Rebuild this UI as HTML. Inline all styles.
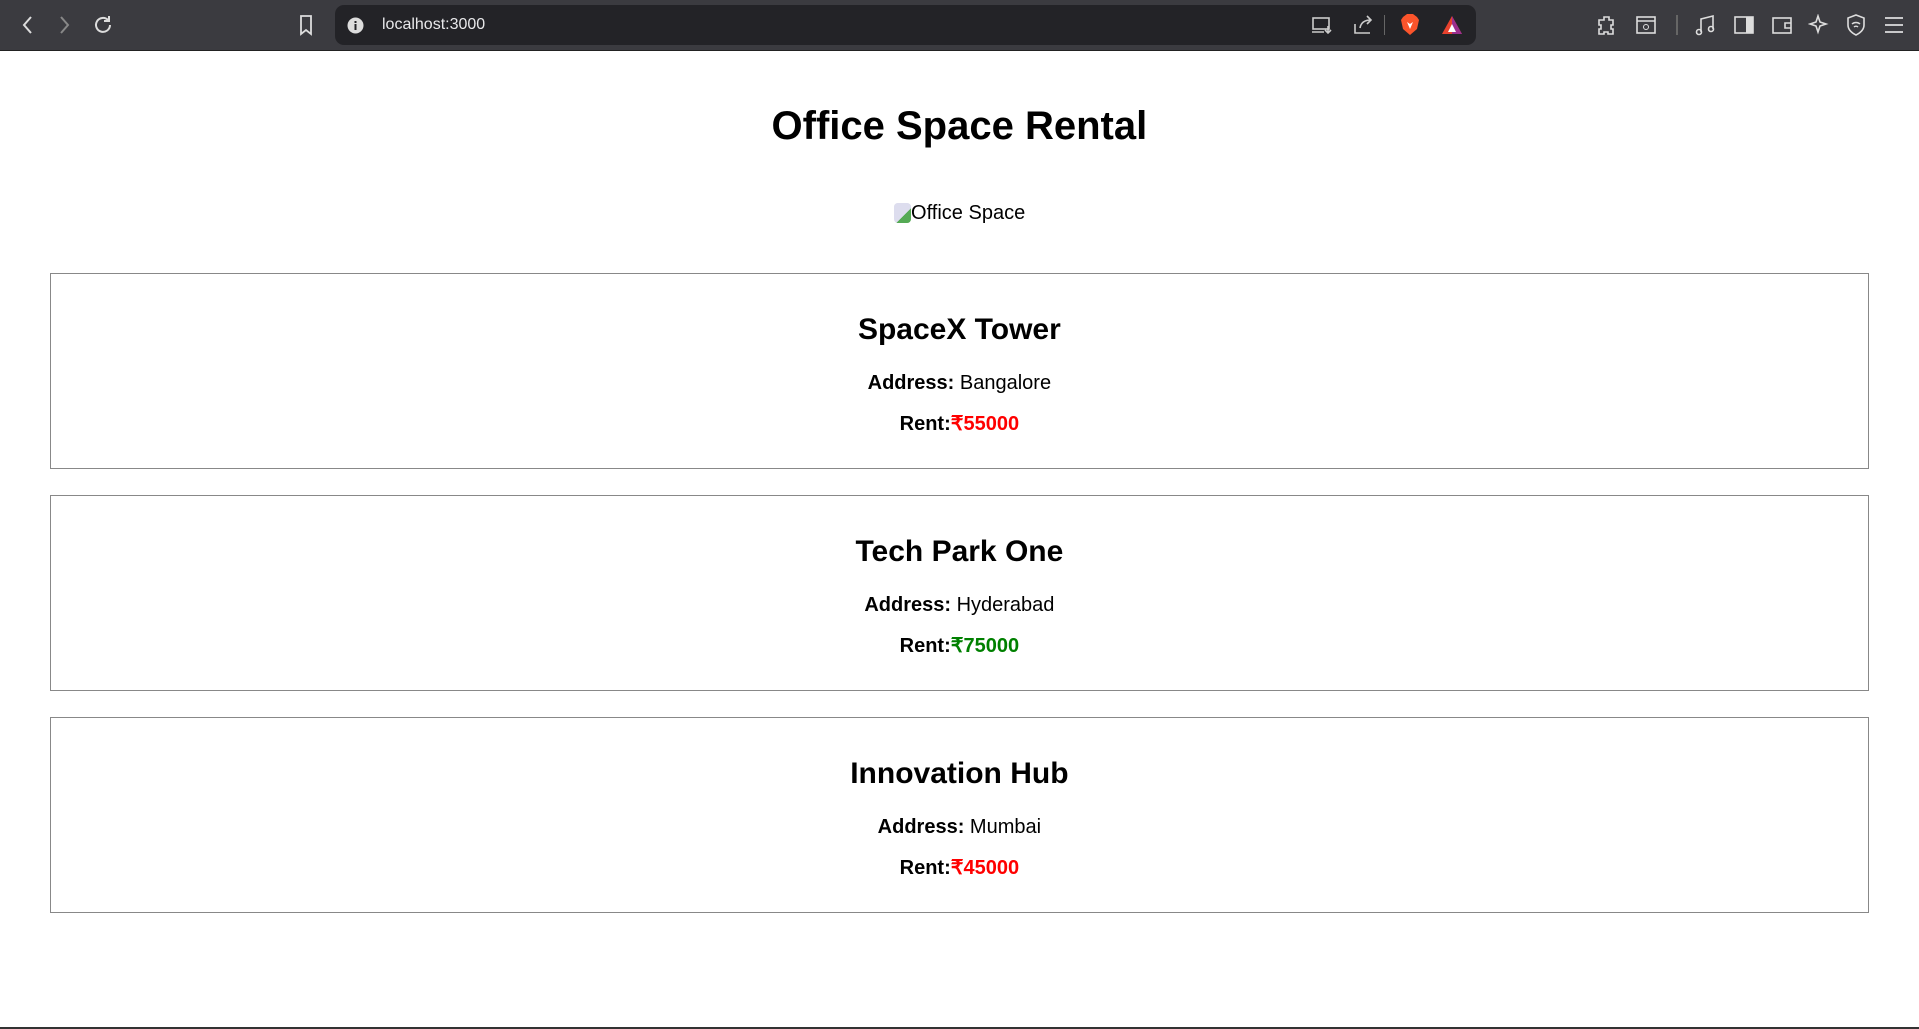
<!DOCTYPE html>
<html><head><meta charset="utf-8"><style>
html,body{margin:0;padding:0;background:#fff;width:1919px;height:1029px;overflow:hidden}
.chrome{position:absolute;left:0;top:0;width:1919px;height:50px;background:#3b3b40;border-bottom:1px solid #222}
.addr{position:absolute;left:335px;top:5px;width:1141px;height:40px;background:#232327;border-radius:9px}
.addr .url{position:absolute;left:47px;top:11px;color:#e8e8ea;font:16px "Liberation Sans",sans-serif}
.ic{position:absolute;top:14px}
.page{position:absolute;top:51px;left:0;width:1535px;zoom:1.25;font-family:"Liberation Sans",Arial,sans-serif;color:#000}
.inner{padding:10px 40px 0}
h1{text-align:center;font-size:32px;margin:21.4px 0;line-height:37px}
.img{text-align:center;margin:42px 0 39px;font-size:16px;line-height:18px}
.card{border:1px solid #888;padding:10px 10px 16px;margin:21px 0;text-align:center}
.card h2{font-size:24px;margin:20px 0;line-height:28px}
.card p{margin:15px 0;font-size:16px;line-height:18px}
.card h2+p{margin-top:10px}
.card p:last-child{margin-bottom:10px}
.red{color:red;font-weight:bold}.green{color:green;font-weight:bold}
.bottom{position:absolute;left:0;top:1027px;width:1919px;height:2px;background:#333}
</style></head><body>
<div class="chrome">
<svg class="ic" style="left:20px" width="16" height="22" viewBox="0 0 16 22"><path d="M11 3L4 11l7 8" stroke="#ddd" stroke-width="2" fill="none"/></svg>
<svg class="ic" style="left:56px" width="16" height="22" viewBox="0 0 16 22"><path d="M5 3l7 8-7 8" stroke="#888" stroke-width="2" fill="none"/></svg>
<svg class="ic" style="left:92px" width="22" height="22" viewBox="0 0 22 22"><path d="M18 11a7 7 0 1 1-2-5M17 2v5h-5" stroke="#ddd" stroke-width="2" fill="none"/></svg>
<svg class="ic" style="left:298px" width="16" height="22" viewBox="0 0 16 22"><path d="M3 2h10v18l-5-4-5 4z" stroke="#ddd" stroke-width="1.8" fill="none"/></svg>
<div class="addr">
<svg style="position:absolute;left:12px;top:12px" width="17" height="17"><circle cx="8.5" cy="8.5" r="8" fill="#ddd"/><rect x="7.5" y="7" width="2" height="6" fill="#232327"/><rect x="7.5" y="4" width="2" height="2" fill="#232327"/></svg>
<div class="url">localhost:3000</div>
<svg style="position:absolute;left:976px;top:10px" width="22" height="20"><rect x="2" y="3" width="16" height="11" stroke="#ccc" stroke-width="1.6" fill="none"/><path d="M1 17h12M17 11v7M14 15l3 3 3-3" stroke="#ccc" stroke-width="1.6" fill="none"/></svg>
<svg style="position:absolute;left:1017px;top:9px" width="22" height="22"><path d="M3 10v9h15M8 14c1-6 5-8 11-8M15 2l4 4-4 4" stroke="#ccc" stroke-width="1.6" fill="none"/></svg>
<div style="position:absolute;left:1049px;top:10px;width:1px;height:20px;background:#666"></div>
<svg style="position:absolute;left:1065px;top:8px" width="20" height="24"><path d="M3 4l4-3h6l4 3 2 3-2 9-7 6-7-6-2-9z" fill="#fb542b"/><path d="M7 9l3 2 3-2-3 7z" fill="#fff"/></svg>
<svg style="position:absolute;left:1106px;top:10px" width="22" height="20"><path d="M11 1l10 18H1z" fill="#e8422e"/><path d="M11 1l10 18H11z" fill="#9b2f8e"/><path d="M11 9l4 8H7z" fill="#fff"/></svg>
</div>
<svg class="ic" style="left:1596px" width="22" height="22"><path d="M8 3h5v3h4v5h-2v4h2v5h-5v-2H8v2H3v-5h2v-4H3V6h5z" stroke="#ddd" stroke-width="1.6" fill="none"/></svg>
<svg class="ic" style="left:1635px" width="22" height="22"><rect x="2" y="3" width="18" height="16" stroke="#ddd" stroke-width="1.6" fill="none"/><path d="M2 7h18" stroke="#ddd" stroke-width="1.6"/><circle cx="11" cy="13" r="2.5" stroke="#ddd" fill="none"/></svg>
<div style="position:absolute;left:1676px;top:15px;width:2px;height:20px;background:#666"></div>
<svg class="ic" style="left:1694px" width="22" height="22"><path d="M7 18V5l12-3v13" stroke="#ddd" stroke-width="1.6" fill="none"/><circle cx="5" cy="18" r="2.5" stroke="#ddd" stroke-width="1.6" fill="none"/><circle cx="17" cy="15" r="2.5" stroke="#ddd" stroke-width="1.6" fill="none"/></svg>
<svg class="ic" style="left:1733px" width="22" height="22"><rect x="2" y="3" width="18" height="16" stroke="#ddd" stroke-width="1.6" fill="none"/><rect x="13" y="3" width="7" height="16" fill="#ddd"/></svg>
<svg class="ic" style="left:1771px" width="22" height="22"><rect x="2" y="4" width="18" height="15" stroke="#ddd" stroke-width="1.6" fill="none"/><path d="M20 9h-6v5h6" stroke="#ddd" stroke-width="1.6" fill="none"/></svg>
<svg class="ic" style="left:1808px" width="22" height="22"><path d="M10 2l2 6 6 2-6 2-2 6-2-6-6-2 6-2z" stroke="#ddd" stroke-width="1.6" fill="none"/></svg>
<svg class="ic" style="left:1845px" width="22" height="22"><path d="M11 1l8 3v7c0 5-4 8-8 10-4-2-8-5-8-10V4z" stroke="#ddd" stroke-width="1.6" fill="none"/><path d="M7 10a6 6 0 0 1 8 0M9 13a3 3 0 0 1 4 0" stroke="#ddd" stroke-width="1.5" fill="none"/></svg>
<svg class="ic" style="left:1883px" width="22" height="22"><path d="M2 4h18M2 11h18M2 18h18" stroke="#ddd" stroke-width="1.8"/></svg>
</div>
<div class="page"><div class="inner">
<h1>Office Space Rental</h1>
<div class="img"><span style="display:inline-block;width:14px;height:16px;vertical-align:-3px;background:linear-gradient(135deg,#dde 60%,#5a5 60%);border-radius:3px"></span>Office Space</div>
<div class="card"><h2>SpaceX Tower</h2><p><b>Address:</b> Bangalore</p><p><b>Rent:</b><span class="red">₹55000</span></p></div>
<div class="card"><h2>Tech Park One</h2><p><b>Address:</b> Hyderabad</p><p><b>Rent:</b><span class="green">₹75000</span></p></div>
<div class="card"><h2>Innovation Hub</h2><p><b>Address:</b> Mumbai</p><p><b>Rent:</b><span class="red">₹45000</span></p></div>
</div></div>
<div class="bottom"></div>
</body></html>
